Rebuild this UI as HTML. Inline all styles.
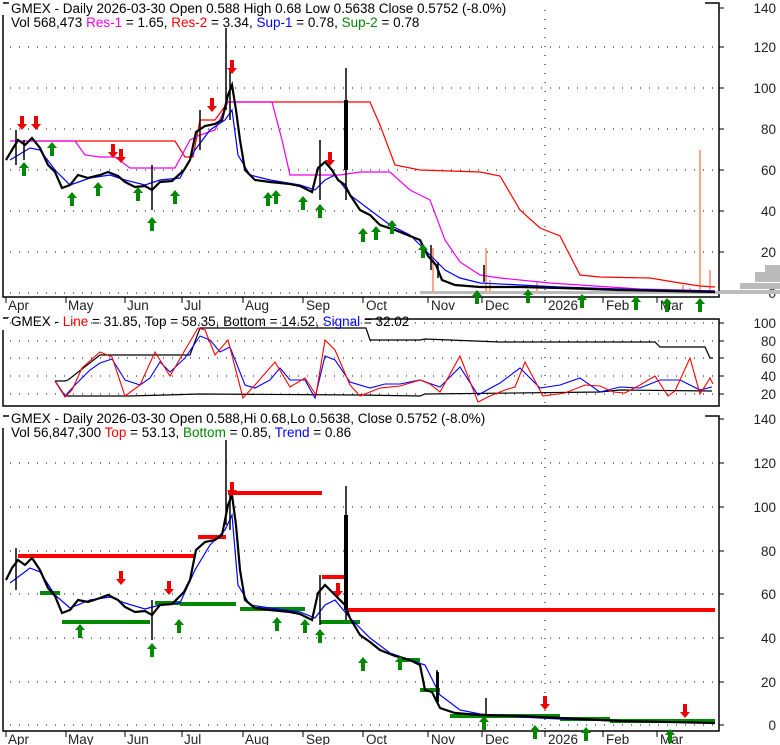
<!DOCTYPE html>
<html><head><meta charset="utf-8"><style>
body{margin:0;background:#fff;width:780px;height:745px;overflow:hidden}
svg{display:block}
text{font-family:"Liberation Sans",sans-serif;font-size:13.5px}
.ax{font-size:13.5px;fill:#222}
</style></head><body>
<svg width="780" height="745" viewBox="0 0 780 745" xmlns="http://www.w3.org/2000/svg">
<defs>
<g id="ua"><path d="M0,-8 L5,-2 L2,-2 L2,6 L-2,6 L-2,-2 L-5,-2 Z" fill="#080"/></g>
<g id="da"><path d="M0,8 L5,2 L2,2 L2,-6 L-2,-6 L-2,2 L-5,2 Z" fill="#e00"/></g>
</defs>
<g fill="none" stroke="#000" stroke-width="1.5">
<path d="M3,15 V297 H719 V3 H705"/>
<path d="M3,330 V406 H719 V319 H365"/>
<path d="M3,318 h6"/>
<path d="M3,428 V731 H719 V416 H705"/>
<path d="M3,416 h6 M3,3 h6"/>
</g>
<g stroke="#000" stroke-width="1" stroke-dasharray="1,8" fill="none">
<path d="M10,47H719M10,88H719M10,129H719M10,170H719M10,211H719M10,252H719M10,293H719"/>
<path d="M10,323H719M10,341H719M10,358H719M10,376H719M10,394H719"/>
<path d="M10,463H719M10,507H719M10,551H719M10,594H719M10,638H719M10,682H719M10,725H719"/>
<path d="M545,10V297M545,330V406M545,440V731"/>
</g>
<g stroke="#000" stroke-width="1">
<path d="M719,8h5M719,47h5M719,88h5M719,129h5M719,170h5M719,211h5M719,252h5M719,293h5"/>
<path d="M719,323h5M719,341h5M719,358h5M719,376h5M719,394h5"/>
<path d="M719,419h5M719,463h5M719,507h5M719,551h5M719,594h5M719,638h5M719,682h5M719,725h5"/>
<path d="M6,297v6M66,297v6M125,297v6M182,297v6M243,297v6M303,297v6M363,297v6M428,297v6M482,297v6M545,297v6M603,297v6M657,297v6"/>
<path d="M6,731v6M66,731v6M125,731v6M182,731v6M243,731v6M303,731v6M363,731v6M428,731v6M482,731v6M545,731v6M603,731v6M657,731v6"/>
</g>
<g class="ax" text-anchor="end">
<text x="776" y="13">140</text><text x="776" y="52">120</text><text x="776" y="93">100</text><text x="776" y="134">80</text><text x="776" y="175">60</text><text x="776" y="216">40</text><text x="776" y="257">20</text><text x="776" y="298">0</text>
<text x="776" y="328">100</text><text x="776" y="346">80</text><text x="776" y="363">60</text><text x="776" y="381">40</text><text x="776" y="399">20</text>
<text x="776" y="424">140</text><text x="776" y="468">120</text><text x="776" y="512">100</text><text x="776" y="556">80</text><text x="776" y="599">60</text><text x="776" y="643">40</text><text x="776" y="687">20</text><text x="776" y="730">0</text>
</g>
<g class="ax">
<text x="8" y="310">Apr</text><text x="68" y="310">May</text><text x="127" y="310">Jun</text><text x="184" y="310">Jul</text><text x="245" y="310">Aug</text><text x="306" y="310">Sep</text><text x="366" y="310">Oct</text><text x="431" y="310">Nov</text><text x="485" y="310">Dec</text><text x="548" y="310">2026</text><text x="606" y="310">Feb</text><text x="660" y="310">Mar</text>
<text x="8" y="744">Apr</text><text x="68" y="744">May</text><text x="127" y="744">Jun</text><text x="184" y="744">Jul</text><text x="245" y="744">Aug</text><text x="306" y="744">Sep</text><text x="366" y="744">Oct</text><text x="431" y="744">Nov</text><text x="485" y="744">Dec</text><text x="548" y="744">2026</text><text x="606" y="744">Feb</text><text x="660" y="744">Mar</text>
</g>

<g fill="#bbb"><rect x="720" y="290" width="60" height="4"/><rect x="740" y="283" width="40" height="6"/><rect x="755" y="272" width="25" height="10"/><rect x="765" y="265" width="15" height="8"/><rect x="420" y="291" width="300" height="3"/></g>
<g stroke="#f9a88a" stroke-width="2"><path d="M433,293V248M486,293V248M700,293V150M710,293V270M490,293V280M537,293V282M683,293V285M690,293V288"/></g>
<polyline fill="none" stroke="#f00" stroke-width="1.2" points="28,141 175,141 185,157 193,157 200,120 215,120 228,102 370,102 380,125 395,165 420,170 480,172 500,176 520,210 540,228 560,236 580,275 600,277 650,278 680,283 700,286 715,287"/>
<polyline fill="none" stroke="#e0e" stroke-width="1.2" points="10,141 75,141 85,155 100,157 115,157 130,168 160,168 175,168 190,140 200,135 215,130 228,102 272,102 282,140 290,175 340,175 360,172 390,172 410,190 430,200 445,240 460,262 480,275 500,278 550,283 640,289 715,291"/>
<polyline fill="none" stroke="#00f" stroke-width="1.2" points="10,160 30,148 40,150 55,170 70,185 90,178 110,175 125,180 145,185 160,180 180,178 195,150 210,130 225,120 232,110 238,155 250,175 270,180 300,185 315,190 325,180 335,175 350,195 370,210 390,225 410,235 430,255 445,270 460,278 480,283 520,285 560,287 620,289 715,291"/>
<polyline fill="none" stroke="#000" stroke-width="2.2" points="6,160 12,150 18,140 25,145 32,138 40,148 48,165 55,172 62,188 70,185 78,175 88,178 100,175 108,172 118,176 125,182 135,187 145,186 152,190 160,182 172,181 184,170 190,160 196,132 205,126 215,124 222,120 228,95 232,85 236,110 240,140 245,170 255,180 270,182 290,184 300,186 312,192 318,168 325,162 332,170 338,180 345,185 350,195 360,210 370,215 380,225 395,230 410,236 420,240 428,256 436,265 442,280 455,285 480,287 520,287 560,288 620,290 715,292"/>
<g stroke="#000" stroke-width="1.5"><path d="M226,28V110M230,70V120M346,68V200M346,100V170M320,140V200M152,165V210M431,245V270M438,262V278M484,265V282M16,130V165M200,110V150M24,140V160"/></g>
<rect x="344" y="100" width="4" height="70" fill="#000"/>
<g><use href="#da" x="22" y="122"/><use href="#da" x="36" y="122"/><use href="#da" x="113" y="150"/><use href="#da" x="121" y="155"/><use href="#da" x="212" y="104"/><use href="#da" x="232" y="66"/><use href="#da" x="330" y="158"/>
<use href="#ua" x="24" y="170"/><use href="#ua" x="52" y="150"/><use href="#ua" x="72" y="200"/><use href="#ua" x="98" y="190"/><use href="#ua" x="138" y="195"/><use href="#ua" x="152" y="225"/><use href="#ua" x="175" y="198"/><use href="#ua" x="268" y="200"/><use href="#ua" x="276" y="198"/><use href="#ua" x="303" y="204"/><use href="#ua" x="320" y="212"/><use href="#ua" x="363" y="236"/><use href="#ua" x="376" y="234"/><use href="#ua" x="392" y="228"/><use href="#ua" x="423" y="252"/><use href="#ua" x="477" y="298"/><use href="#ua" x="528" y="297"/><use href="#ua" x="582" y="302"/><use href="#ua" x="636" y="304"/><use href="#ua" x="667" y="306"/><use href="#ua" x="700" y="306"/></g>
<text x="11" y="13">GMEX - Daily 2026-03-30 Open 0.588  High 0.68  Low 0.5638  Close 0.5752 (-8.0%)</text>
<text x="11" y="27">Vol 568,473 <tspan fill="#e0e">Res-1</tspan> = 1.65, <tspan fill="#f00">Res-2</tspan> = 3.34, <tspan fill="#00f">Sup-1</tspan> = 0.78, <tspan fill="#080">Sup-2</tspan> = 0.78</text>

<polyline fill="none" stroke="#000" stroke-width="1.2" points="55,381 65,381 68,380 100,355 190,355 197,336 200,328 366,328 370,340 420,340 425,339 500,342 655,342 660,347 705,347 710,358 713,358"/>
<polyline fill="none" stroke="#000" stroke-width="1.2" points="55,381 65,396 130,396 200,394 360,395 420,396 425,394 600,392 620,390 712,391"/>
<polyline fill="none" stroke="#00f" stroke-width="1.1" points="55,381 65,396 75,385 90,370 100,363 112,359 125,380 140,385 150,378 160,362 170,372 185,358 200,336 210,340 220,352 230,347 245,385 255,388 270,380 280,368 290,380 305,380 315,398 325,356 335,360 350,382 370,388 385,384 400,384 420,380 440,387 460,367 478,395 500,383 520,368 540,388 560,385 580,378 600,392 620,387 640,388 660,380 680,380 700,390 712,387"/>
<polyline fill="none" stroke="#f00" stroke-width="1.1" points="55,381 65,397 72,390 82,368 100,352 112,357 125,396 140,385 155,352 170,376 185,350 198,328 205,330 215,355 228,340 243,398 255,385 275,362 290,387 305,378 316,395 325,340 335,350 350,385 360,396 380,388 400,386 420,380 430,384 440,392 460,356 478,402 490,396 505,390 515,387 525,362 543,396 565,393 585,385 600,386 613,392 625,393 640,385 655,376 668,396 675,391 690,358 700,394 710,378 713,384"/>
<rect x="8" y="318" width="356" height="3" fill="#fff"/>
<text x="11" y="326">GMEX - <tspan fill="#f00">Line</tspan> = 31.85, Top = 58.35, Bottom = 14.52, <tspan fill="#00f">Signal</tspan> = 32.02</text>

<g stroke-width="4" fill="none">
<path stroke="#f00" d="M18,556H195M198,537H226M228,493H322M322,577H345M348,610H715"/>
<path stroke="#080" d="M40,593H60M62,622H150M155,603H180M180,604H236M240,609H305M320,622H360M400,660H420M420,690H440M450,716H560M560,719H610M610,721H715"/>
</g>
<polyline fill="none" stroke="#00f" stroke-width="1.2" points="10,583 30,568 40,572 55,595 70,608 90,600 110,597 125,603 145,609 160,605 180,603 195,570 210,545 225,530 232,515 238,585 250,605 270,608 300,612 315,618 325,605 335,600 350,618 370,638 390,653 410,660 425,665 440,695 460,710 480,714 520,717 560,719 620,721 715,723"/>
<polyline fill="none" stroke="#000" stroke-width="2.2" points="6,580 12,568 18,560 25,565 32,558 40,570 48,588 55,596 62,613 70,610 78,600 88,602 100,598 108,595 118,600 125,607 135,612 145,611 152,615 160,605 172,604 184,592 190,580 196,550 205,542 215,540 222,535 228,505 232,495 236,525 240,570 245,600 255,608 270,610 290,612 300,614 312,620 318,593 325,585 335,595 345,605 350,618 360,635 370,642 380,650 395,656 410,660 420,665 425,690 432,692 440,708 455,713 480,715 520,716 560,718 620,721 715,723"/>
<g stroke="#000" stroke-width="1.5"><path d="M226,440V525M230,495V530M346,486V620M320,575V625M152,600V640M437,670V703M486,698V716M16,548V590"/></g>
<rect x="344" y="515" width="4" height="95" fill="#000"/>
<rect x="436" y="672" width="3" height="30" fill="#000"/>
<g><use href="#da" x="121" y="577"/><use href="#da" x="169" y="587"/><use href="#da" x="232" y="488"/><use href="#da" x="338" y="589"/><use href="#da" x="545" y="702"/><use href="#da" x="685" y="710"/>
<use href="#ua" x="80" y="632"/><use href="#ua" x="152" y="651"/><use href="#ua" x="179" y="627"/><use href="#ua" x="277" y="625"/><use href="#ua" x="305" y="627"/><use href="#ua" x="320" y="637"/><use href="#ua" x="363" y="665"/><use href="#ua" x="400" y="664"/><use href="#ua" x="484" y="724"/><use href="#ua" x="535" y="733"/><use href="#ua" x="586" y="735"/><use href="#ua" x="670" y="737"/></g>
<text x="11" y="423">GMEX - Daily 2026-03-30 Open 0.588,Hi 0.68,Lo 0.5638, Close 0.5752 (-8.0%)</text>
<text x="11" y="437">Vol 56,847,300 <tspan fill="#f00">Top</tspan> = 53.13, <tspan fill="#080">Bottom</tspan> = 0.85, <tspan fill="#00f">Trend</tspan> = 0.86</text>
</svg>
</body></html>
